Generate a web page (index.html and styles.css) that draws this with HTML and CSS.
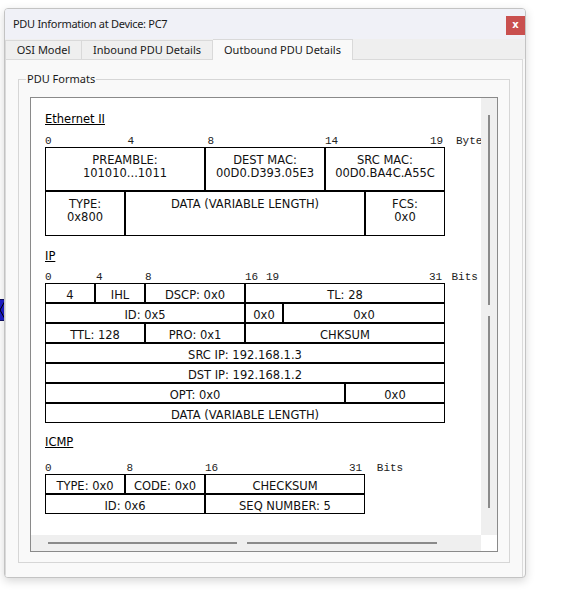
FILE: index.html
```html
<!DOCTYPE html>
<html>
<head>
<meta charset="utf-8">
<title>PDU Information at Device: PC7</title>
<link rel="stylesheet" href="styles.css">
</head>
<body>
<div class="bg-icon">
  <svg width="6" height="22" viewBox="0 0 6 22"><rect x="0" y="0" width="6" height="22" fill="#1d1dc9" stroke="#000" stroke-width="1"/><polyline points="6,2 1,11 6,20" fill="none" stroke="#000" stroke-width="1"/></svg>
</div>
<div class="window">
  <div class="titlebar">
    <span class="title">PDU Information at Device: PC7</span>
    <div class="close">x</div>
  </div>
  <div class="tabs">
    <div class="tab tab-osi">OSI Model</div>
    <div class="tab tab-in">Inbound PDU Details</div>
    <div class="tab tab-out active">Outbound PDU Details</div>
  </div>
  <div class="panel">
    <fieldset class="formats">
      <legend>PDU Formats</legend>
      <div class="scrollpane">
        <div class="viewport">
          <div class="content">
            <section class="pdu pdu-eth">
              <div class="pdu-title">Ethernet II</div>
              <div class="ruler ruler-eth"><span>0</span><span>4</span><span>8</span><span>14</span><span>19</span><span>Bytes</span></div>
              <div class="table">
                <div class="row eth-r1">
                  <div class="cell w160">PREAMBLE:<br>101010...1011</div>
                  <div class="cell w120">DEST MAC:<br>00D0.D393.05E3</div>
                  <div class="cell w120">SRC MAC:<br>00D0.BA4C.A55C</div>
                </div>
                <div class="row eth-r2">
                  <div class="cell w80">TYPE:<br>0x800</div>
                  <div class="cell w240">DATA (VARIABLE LENGTH)</div>
                  <div class="cell w80">FCS:<br>0x0</div>
                </div>
              </div>
            </section>

            <section class="pdu pdu-ip">
              <div class="pdu-title">IP</div>
              <div class="ruler ruler-ip"><span>0</span><span>4</span><span>8</span><span>16</span><span>19</span><span>31</span><span>Bits</span></div>
              <div class="table">
                <div class="row ip-row">
                  <div class="cell w50">4</div>
                  <div class="cell w50">IHL</div>
                  <div class="cell w100">DSCP: 0x0</div>
                  <div class="cell w200">TL: 28</div>
                </div>
                <div class="row ip-row">
                  <div class="cell w200">ID: 0x5</div>
                  <div class="cell w38">0x0</div>
                  <div class="cell w162">0x0</div>
                </div>
                <div class="row ip-row">
                  <div class="cell w100">TTL: 128</div>
                  <div class="cell w100">PRO: 0x1</div>
                  <div class="cell w200">CHKSUM</div>
                </div>
                <div class="row ip-row">
                  <div class="cell w400">SRC IP: 192.168.1.3</div>
                </div>
                <div class="row ip-row">
                  <div class="cell w400">DST IP: 192.168.1.2</div>
                </div>
                <div class="row ip-row">
                  <div class="cell w300">OPT: 0x0</div>
                  <div class="cell w100">0x0</div>
                </div>
                <div class="row ip-row">
                  <div class="cell w400">DATA (VARIABLE LENGTH)</div>
                </div>
              </div>
            </section>

            <section class="pdu pdu-icmp">
              <div class="pdu-title">ICMP</div>
              <div class="ruler ruler-icmp"><span>0</span><span>8</span><span>16</span><span>31</span><span>Bits</span></div>
              <div class="table">
                <div class="row ip-row">
                  <div class="cell w80">TYPE: 0x0</div>
                  <div class="cell w80">CODE: 0x0</div>
                  <div class="cell w160">CHECKSUM</div>
                </div>
                <div class="row ip-row">
                  <div class="cell w160">ID: 0x6</div>
                  <div class="cell w160">SEQ NUMBER: 5</div>
                </div>
              </div>
            </section>
          </div>
        </div>
        <div class="vbar"><div class="vthumb vthumb-a"></div><div class="vthumb vthumb-b"></div></div>
        <div class="hbar"><div class="hthumb hthumb-a"></div><div class="hthumb hthumb-b"></div></div>
        <div class="corner"></div>
      </div>
    </fieldset>
  </div>
</div>
</body>
</html>
```

FILE: styles.css
```css
html, body {
  margin: 0;
  padding: 0;
  background: #ffffff;
}

body {
  position: relative;
  width: 562px;
  height: 607px;
  overflow: hidden;
  font-family: "Noto Sans", "DejaVu Sans", sans-serif;
}

.bg-icon {
  position: absolute;
  left: -1px;
  top: 299px;
  width: 6px;
  height: 22px;
  z-index: 0;
}

.bg-icon svg {
  display: block;
}

.window {
  position: relative;
  z-index: 1;
  margin: 8px 0 0 4px;
  width: 522px;
  height: 570px;
  box-sizing: border-box;
  border: 1px solid #c3c3c3;
  border-radius: 4px;
  background: #f8f8f8;
  box-shadow: 0 3px 10px rgba(0, 0, 0, 0.16);
  display: flex;
  flex-direction: column;
  overflow: hidden;
}

.titlebar {
  height: 30px;
  flex: none;
  background: #f0f1f7;
  display: flex;
  align-items: flex-start;
  justify-content: space-between;
}

.title {
  margin: 7px 0 0 8px;
  font-size: 11px;
  line-height: 16px;
  letter-spacing: -0.3px;
  color: #1a1a1a;
}

.close {
  margin-top: 7px;
  width: 19px;
  height: 19px;
  background: #c9504f;
  color: #ffffff;
  font-family: "DejaVu Sans", sans-serif;
  font-weight: bold;
  font-size: 10px;
  line-height: 18px;
  text-align: center;
}

.tabs {
  height: 20px;
  flex: none;
  background: #efefef;
  display: flex;
  align-items: flex-end;
  position: relative;
  z-index: 2;
}

.tab {
  box-sizing: border-box;
  height: 19px;
  border: 1px solid #d9d9d9;
  border-bottom: none;
  border-left: none;
  background: #efefef;
  font-size: 11px;
  line-height: 18px;
  color: #1a1a1a;
  text-align: center;
}

.tab-osi {
  width: 77px;
  border-left: 1px solid #d9d9d9;
}

.tab-in {
  width: 131px;
}

.tab.active {
  width: 140px;
  height: 21px;
  margin-bottom: -1px;
  background: #f9f9f9;
  line-height: 19px;
}

.panel {
  flex: 1;
  margin-right: 2px;
  border: 1px solid #dadada;
  border-bottom: none;
  background: #f9f9f9;
  position: relative;
  z-index: 1;
}

.formats {
  margin: 11px 12px 0 12px;
  padding: 10px 11px 10px 11px;
  border: 1px solid #d6d6d6;
  min-width: 0;
}

.formats legend {
  margin-left: -4px;
  padding: 0 1px;
  font-size: 11px;
  line-height: 16px;
  color: #1a1a1a;
}

.scrollpane {
  border: 1px solid #8a8a8a;
  display: grid;
  grid-template-columns: 450px 16px;
  grid-template-rows: 437px 16px;
  background: #ffffff;
}

.viewport {
  overflow: hidden;
  background: #ffffff;
}

.content {
  width: 520px;
  padding: 14px 0 0 14px;
  color: #111;
  font-family: "DejaVu Sans", sans-serif;
  font-size: 11.5px;
}

.pdu-title {
  padding-top: 1px;
  line-height: 13px;
  text-decoration: underline;
  color: #000;
}

.pdu-ip .pdu-title {
  margin-top: 13px;
}

.pdu-icmp .pdu-title {
  margin-top: 12px;
}

.ruler {
  display: grid;
  font-family: "Liberation Mono", "DejaVu Sans Mono", monospace;
  font-size: 11px;
  line-height: 12px;
  color: #222;
  white-space: pre;
}

.ruler-eth {
  margin-top: 9px;
  grid-template-columns: 82.6px 80px 117.4px 105px 26px auto;
}

.ruler-ip {
  margin-top: 8px;
  grid-template-columns: 51px 49px 100px 21px 163px 22.5px auto;
}

.ruler-icmp {
  margin-top: 13px;
  grid-template-columns: 81.6px 78.4px 144px 27.8px auto;
}

.table {
  display: flex;
  flex-direction: column;
}

.row {
  display: flex;
}

.cell {
  box-sizing: border-box;
  border: 1px solid #000;
  text-align: center;
  white-space: nowrap;
}

.eth-r1 .cell {
  height: 44px;
  padding-top: 6px;
  line-height: 13.4px;
}

.eth-r2 .cell {
  height: 45px;
  padding-top: 6px;
  line-height: 13.4px;
}

.ip-row .cell {
  height: 20px;
  padding-top: 4px;
  line-height: 14px;
}

.w38 { width: 38px; }
.w50 { width: 50px; }
.w80 { width: 80px; }
.w100 { width: 100px; }
.w120 { width: 120px; }
.w160 { width: 160px; }
.w162 { width: 162px; }
.w200 { width: 200px; }
.w240 { width: 240px; }
.w300 { width: 300px; }
.w400 { width: 400px; }

.vbar {
  background: #efefef;
  display: flex;
  flex-direction: column;
  padding: 17px 0 0 7px;
  gap: 11px;
}

.vthumb {
  width: 2px;
  background: #8a8a8a;
}

.vthumb-a { height: 190px; }
.vthumb-b { height: 192px; }

.hbar {
  background: #efefef;
  display: flex;
  padding: 7px 0 0 17px;
  gap: 10px;
}

.hthumb {
  height: 2px;
  background: #8a8a8a;
}

.hthumb-a { width: 189px; }
.hthumb-b { width: 190px; }

.corner {
  background: #ffffff;
}
```
